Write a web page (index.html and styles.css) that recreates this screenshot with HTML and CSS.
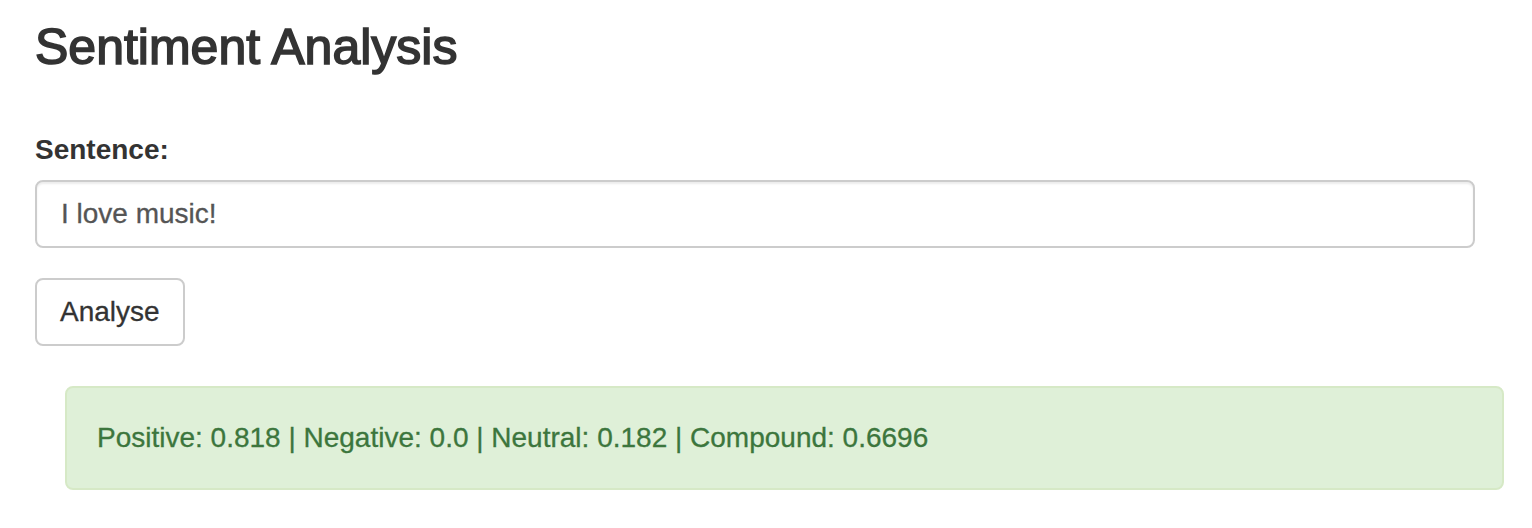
FILE: index.html
```html
<!DOCTYPE html>
<html lang="en">
<head>
<meta charset="utf-8">
<title>Sentiment Analysis</title>
<link rel="stylesheet" href="styles.css">
</head>
<body>
<div class="container">
  <h3 class="title">Sentiment Analysis</h3>
  <form class="form">
    <div class="form-group">
      <label class="label" for="sentence">Sentence:</label>
      <input class="input" id="sentence" type="text" value="I love music!">
    </div>
    <button class="btn" type="button">Analyse</button>
  </form>
  <div class="result">
    <div class="alert">Positive: 0.818 | Negative: 0.0 | Neutral: 0.182 | Compound: 0.6696</div>
  </div>
</div>
</body>
</html>
```
FILE: styles.css
```css
* { box-sizing: border-box; }
html, body { margin: 0; padding: 0; background: #fff; }
body {
  font-family: "Liberation Sans", Arial, Helvetica, sans-serif;
  color: #333;
  font-size: 28px;
  line-height: 40px;
}
.container {
  padding: 20px 57px 0 35px;
}
.title {
  margin: 0;
  font-size: 50px;
  font-weight: 500;
  line-height: 54px;
  color: #333;
  -webkit-text-stroke: 1.6px #333;
}
.form {
  margin-top: 56px;
  display: flex;
  flex-direction: column;
  align-items: flex-start;
}
.form-group {
  width: 100%;
  margin-bottom: 30px;
  display: flex;
  flex-direction: column;
}
.label {
  font-weight: 700;
  font-size: 28px;
  line-height: 40px;
  margin-bottom: 10px;
}
.input {
  display: block;
  width: 100%;
  height: 68px;
  padding: 12px 24px;
  font-family: inherit;
  font-size: 28px;
  line-height: 40px;
  color: #555;
  background: #fff;
  border: 2px solid #ccc;
  border-radius: 8px;
  box-shadow: inset 0 2px 2px rgba(0,0,0,.075);
  outline: none;
  -webkit-text-stroke: 0.3px #555;
}
.btn {
  height: 68px;
  padding: 12px 23px;
  font-family: inherit;
  font-size: 28px;
  line-height: 40px;
  color: #333;
  background: #fff;
  border: 2px solid #ccc;
  border-radius: 8px;
  -webkit-text-stroke: 0.3px #333;
}
.result {
  margin-top: 40px;
  padding-left: 30px;
  margin-right: -29px;
}
.alert {
  padding: 30px;
  background: #dff0d8;
  border: 2px solid #d6e9c6;
  border-radius: 8px;
  color: #3c763d;
  font-size: 28px;
  line-height: 40px;
  -webkit-text-stroke: 0.3px #3c763d;
}
```
